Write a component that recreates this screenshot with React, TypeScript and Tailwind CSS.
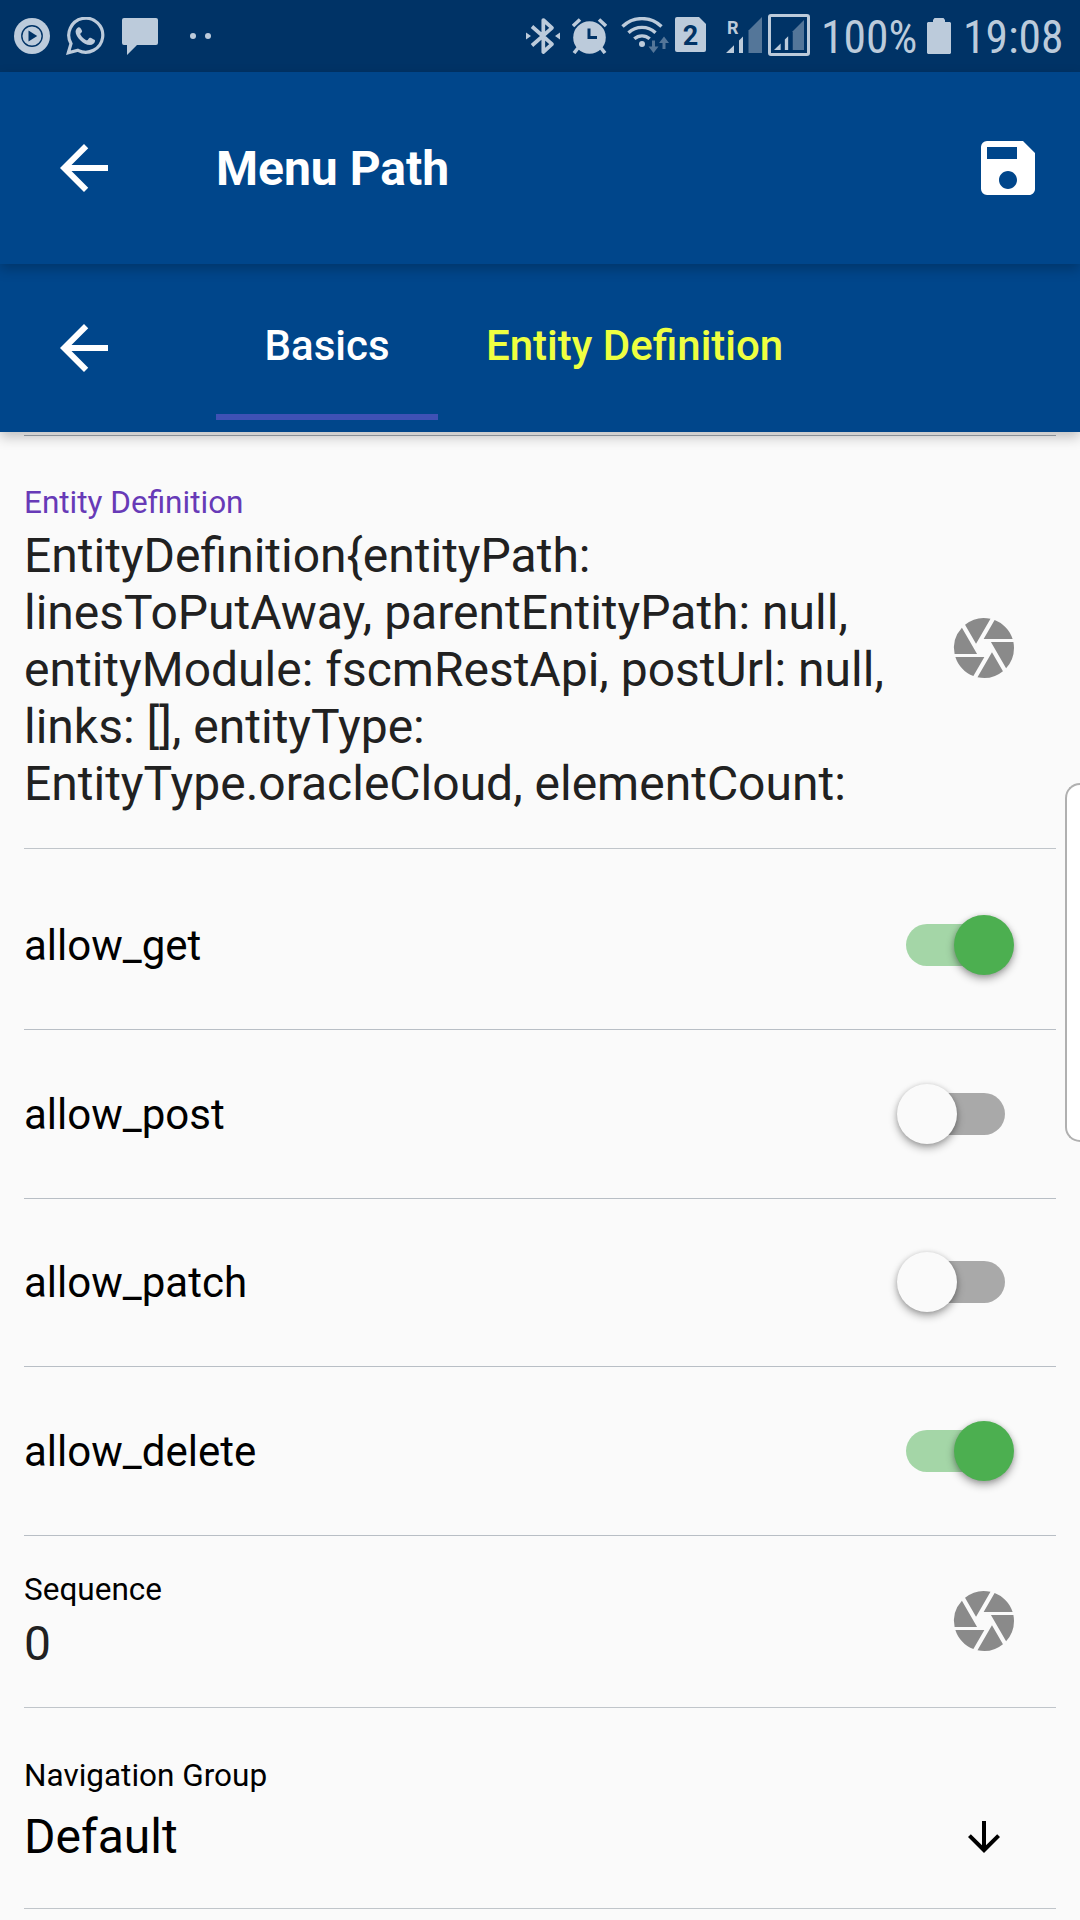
import type { ReactNode } from "react";
import { MdArrowBack, MdArrowDownward, MdCamera, MdSave } from "react-icons/md";

function MediaIcon() {
  return (
    <svg className="size-9" viewBox="0 0 36 36">
      <circle cx="18" cy="18" r="18" fill="currentColor" />
      <circle cx="18" cy="18" r="10.2" fill="none" stroke="#003366" strokeWidth="1.4" />
      <path d="M14.5 12.6v10.8l8.7-5.4z" fill="#003366" />
    </svg>
  );
}

function WhatsAppIcon() {
  return (
    <svg className="h-[38px] w-[39px]" viewBox="0 0 39 38">
      <path
        d="M2.3 35.800l2.700-9.200A17 17 0 1 1 12 33.300z"
        fill="none"
        stroke="currentColor"
        strokeWidth="3.200"
        strokeLinejoin="miter"
      />
      <path
        d="M13.200 10.200c-1.200-.2-3.600 2-3.600 4.500 0 5.200 7.800 13.300 14.300 13.300 2.700 0 5-1.700 5.200-4.300.1-.9-4.500-3.200-5.400-2.900-.9.300-1.700 2.600-2.700 2.500-1.800-.2-6.800-4.900-6.700-6.400.1-.9 1.900-1.700 1.800-2.700-.1-.9-1.600-3.800-2.900-4z"
        fill="currentColor"
      />
    </svg>
  );
}

function ChatIcon() {
  return (
    <svg className="h-[37px] w-9" viewBox="0 0 36 37">
      <path d="M2 0h32a2 2 0 0 1 2 2v23a2 2 0 0 1-2 2H15L5 37V27H2a2 2 0 0 1-2-2V2a2 2 0 0 1 2-2z" fill="currentColor" />
    </svg>
  );
}

function BluetoothIcon() {
  return (
    <svg className="h-[38px] w-[34px]" viewBox="0 0 34 38">
      <path d="M6 9.500L26 27.200 17.300 35V3L26 10.800 6 28.500" fill="none" stroke="currentColor" strokeWidth="3.700" strokeLinejoin="round" />
      <path d="M0 15.500l5 3.500-5 3.500zM34 15.500L29 19l5 3.500z" fill="currentColor" />
    </svg>
  );
}

function AlarmIcon() {
  return (
    <svg className="h-9 w-[35px]" viewBox="0 0 35 36">
      <circle cx="17.500" cy="19.500" r="16.300" fill="currentColor" />
      <path d="M1 8l7-6.500M34 8l-7-6.500" stroke="currentColor" strokeWidth="3.600" />
      <path d="M6 30l-4 5M29 30l4 5" stroke="currentColor" strokeWidth="3.600" />
      <path d="M17 10.500v9h8" fill="none" stroke="#003366" strokeWidth="3" />
    </svg>
  );
}

function WifiIcon() {
  return (
    <svg className="h-[38px] w-[50px]" viewBox="0 0 50 38">
      <g fill="none" stroke="currentColor" strokeWidth="3.400">
        <path d="M1.500 9.500a28 28 0 0 1 39 0" />
        <path d="M7.500 15.800a19.500 19.500 0 0 1 27 0" />
        <path d="M13.300 21.800a11.500 11.500 0 0 1 15.400 0" />
      </g>
      <circle cx="21" cy="27" r="3" fill="currentColor" />
      <path d="M31 23.500h3v6h3.500l-5 6.500-5-6.500H31zM41.500 32v-6H38l5-6.500 5 6.500h-3.500v6z" fill="#547699" />
    </svg>
  );
}

function SimIcon() {
  return (
    <div className="relative h-[35px] w-[31px]">
      <svg className="h-[35px] w-[31px]" viewBox="0 0 31 35">
        <path d="M2 0h22l7 7v26a2 2 0 0 1-2 2H2a2 2 0 0 1-2-2V2a2 2 0 0 1 2-2z" fill="currentColor" />
      </svg>
      <span className="absolute inset-0 text-center text-[27px] leading-[38px] font-bold text-[#003366]">2</span>
    </div>
  );
}

function SignalBars({ className }: { className: string }) {
  return (
    <svg className={className} viewBox="0 0 36 36" preserveAspectRatio="none">
      <path d="M0 36l8-7.800V36zM13 36V23.500l4-4V36z" fill="currentColor" />
      <path d="M22.500 36V13.500L36 0v36z" fill="#547699" />
    </svg>
  );
}

function StatusBar() {
  return (
    <div className="flex h-[72px] shrink-0 items-start bg-[#003366] pl-3.5 text-[#bccbdb]">
      <div className="flex items-start">
        <div className="mt-[18px]"><MediaIcon /></div>
        <div className="mt-[17px] ml-4"><WhatsAppIcon /></div>
        <div className="mt-[18px] ml-[17px]"><ChatIcon /></div>
        <div className="mt-[33px] ml-8 flex gap-[9px]">
          <span className="size-1.5 rounded-full bg-current" />
          <span className="size-1.5 rounded-full bg-current" />
        </div>
      </div>
      <div className="ml-[315px] flex items-start">
        <div className="mt-[17px]"><BluetoothIcon /></div>
        <div className="mt-[18px] ml-3"><AlarmIcon /></div>
        <div className="mt-[17px] ml-3.5"><WifiIcon /></div>
        <div className="mt-[17px] ml-1"><SimIcon /></div>
        <div className="relative mt-[17px] ml-5">
          <SignalBars className="h-9 w-9" />
          <span className="absolute top-0.5 left-px text-[18px] leading-[18px] font-bold">R</span>
        </div>
        <div className="mt-3.5 ml-1.5 flex h-[42px] w-[42px] items-center justify-center rounded-[3px] border-3 border-current">
          <SignalBars className="h-[30px] w-[30px]" />
        </div>
        <span className="ml-[11px] w-[96px] font-['Roboto_Condensed'] text-[45.5px] leading-[75px]">100%</span>
        <svg className="mt-[18px] ml-[10px] h-9 w-6" viewBox="0 0 24 36">
          <path d="M1 4h5V2l1.500-2h9L18 2v2h5l1 1v30l-1 1H1l-1-1V5z" fill="currentColor" />
        </svg>
        <span className="ml-3 font-['Roboto_Condensed'] text-[45.5px] leading-[75px]">19:08</span>
      </div>
    </div>
  );
}

function AppBar() {
  return (
    <header className="relative z-20 flex h-48 shrink-0 items-center bg-[#00468b] pr-9 pl-12 text-white shadow-[0_5px_12px_rgba(0,0,0,0.24)]">
      <MdArrowBack className="size-[72px]" />
      <h1 className="ml-24 flex-1 text-[48px] leading-[57px] font-bold">Menu Path</h1>
      <MdSave className="size-[72px]" />
    </header>
  );
}

function Tab({ label, active }: { label: string; active?: boolean }) {
  return (
    <div className={active ? "flex h-full w-[222px] flex-col items-center border-b-6 border-[#3f51b5] text-white" : "flex h-full flex-col px-12 text-[#eeff41]"}>
      <span className="mt-[57px] text-[42px] leading-[49px] font-medium">{label}</span>
    </div>
  );
}

function TabBar() {
  return (
    <nav className="relative z-10 flex h-[168px] shrink-0 items-center bg-[#00468b] pl-12 shadow-[0_5px_12px_rgba(0,0,0,0.24)]">
      <MdArrowBack className="size-[72px] text-white" />
      <div className="ml-24 flex h-full pb-3">
        <Tab label="Basics" active />
        <Tab label="Entity Definition" />
      </div>
    </nav>
  );
}

function Field({ label, labelClass, value, valueClass, className, icon }: {
  label: string;
  labelClass: string;
  value: string;
  valueClass: string;
  className: string;
  icon: ReactNode;
}) {
  return (
    <div className={`flex justify-between border-b border-[#c0c5ca] pr-9 ${className}`}>
      <div>
        <p className={`pt-px text-[31.5px] leading-[38px] ${labelClass}`}>{label}</p>
        <p className={`text-[48px] leading-[57px] ${valueClass}`}>{value}</p>
      </div>
      {icon}
    </div>
  );
}

function SwitchRow({ label, on, className }: { label: string; on: boolean; className: string }) {
  return (
    <div className={`flex items-center justify-between border-b border-[#b8bec5] pr-[42px] text-black ${className}`}>
      <span className="pt-0.5 text-[42px] leading-[50px]">{label}</span>
      <div className="relative h-[60px] w-[117px]">
        <div className={on ? "mt-[9px] ml-[9px] h-[42px] w-[99px] rounded-full bg-[#a4d6a7]" : "mt-[9px] ml-[9px] h-[42px] w-[99px] rounded-full bg-[#a9a9a9]"} />
        <div
          className={
            on
              ? "absolute top-0 right-0 size-[60px] rounded-full bg-[#4caf50] shadow-[0_4px_8px_rgba(0,0,0,0.32),0_1px_5px_rgba(0,0,0,0.15)]"
              : "absolute top-0 left-0 size-[60px] rounded-full bg-[#fafafa] shadow-[0_4px_8px_rgba(0,0,0,0.32),0_1px_5px_rgba(0,0,0,0.15)]"
          }
        />
      </div>
    </div>
  );
}

export default function App() {
  return (
    <div className="relative flex h-[1920px] w-[1080px] flex-col overflow-hidden bg-[#fafafa] font-['Roboto',sans-serif]">
      <StatusBar />
      <AppBar />
      <TabBar />
      <main className="flex flex-col px-6">
        <div className="h-1 border-b border-[#a0a8b0]" />
        <Field
          className="h-[413px] pt-[47px]"
          label="Entity Definition"
          labelClass="text-[#673ab7]"
          value="EntityDefinition{entityPath: linesToPutAway, parentEntityPath: null, entityModule: fscmRestApi, postUrl: null, links: [], entityType: EntityType.oracleCloud, elementCount:"
          valueClass="mt-[5px] w-[880px] text-[#212121]"
          icon={<MdCamera className="mt-[129px] size-[72px] shrink-0 text-[#8a8a8a]" />}
        />
        <SwitchRow label="allow_get" on className="h-[181px] pt-3" />
        <SwitchRow label="allow_post" on={false} className="h-[169px]" />
        <SwitchRow label="allow_patch" on={false} className="h-[168px] pb-0.5" />
        <SwitchRow label="allow_delete" on className="h-[169px]" />
        <Field
          className="h-[172px] pt-[34px]"
          label="Sequence"
          labelClass="text-black"
          value="0"
          valueClass="mt-1.5 text-[#212121]"
          icon={<MdCamera className="mt-[15px] size-[72px] shrink-0 text-[#8a8a8a]" />}
        />
        <Field
          className="h-[201px] pt-12"
          label="Navigation Group"
          labelClass="text-black"
          value="Default"
          valueClass="mt-[13px] text-black"
          icon={<MdArrowDownward className="mt-[57px] mr-3 size-12 shrink-0 text-black" />}
        />
      </main>
      <div className="absolute top-[783px] right-0 h-[359px] w-[15px] rounded-l-[20px] border-2 border-r-0 border-[#b0b0b0] bg-white" />
    </div>
  );
}
